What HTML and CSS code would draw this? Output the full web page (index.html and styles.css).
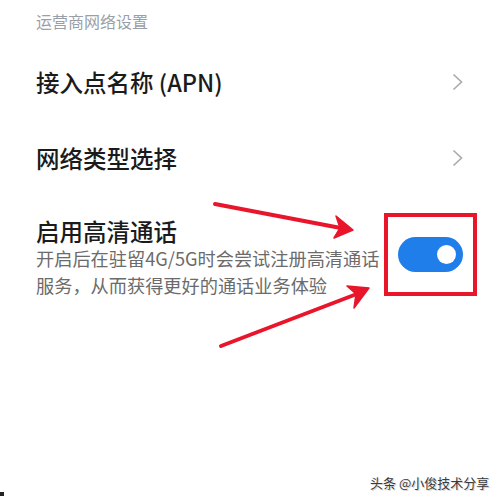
FILE: index.html
```html
<!DOCTYPE html>
<html lang="zh-CN">
<head>
  <meta charset="UTF-8" />
  <meta name="viewport" content="width=device-width, initial-scale=1.0"/>
  <title>运营商网络设置</title>
  <link rel="stylesheet" href="styles.css">
</head>
<body>

  <div class="page">
    <div class="section-title">运营商网络设置</div>

    <div class="row">
      <div class="row-title">接入点名称 (APN)</div>
      <svg class="chevron" width="11" height="18" viewBox="0 0 11 18">
        <polyline points="1.5,1.5 9.5,9 1.5,16.5" />
      </svg>
    </div>

    <div class="row">
      <div class="row-title">网络类型选择</div>
      <svg class="chevron" width="11" height="18" viewBox="0 0 11 18">
        <polyline points="1.5,1.5 9.5,9 1.5,16.5" />
      </svg>
    </div>

    <div class="row row-switch">
      <div class="row-text">
        <div class="row-title">启用高清通话</div>
        <div class="row-desc">开启后在驻留4G/5G时会尝试注册高清通话服务，从而获得更好的通话业务体验</div>
      </div>
      <div class="switch on"><span class="knob"></span></div>
    </div>
  </div>

  <!-- annotations drawn over the screenshot -->
  <svg class="marks" width="500" height="500" viewBox="0 0 500 500">
    <rect x="386" y="215" width="89" height="79" />
    <line x1="215" y1="204" x2="346" y2="229" />
    <polygon points="353,230 336,216 340,228 334,238" />
    <line x1="221" y1="346" x2="362" y2="292" />
    <polygon points="369,288 347,286 356,294 354,308" />
  </svg>

  <div class="watermark">头条 @小俊技术分享</div>
  <div class="dot"></div>

</body>
</html>
```

FILE: styles.css
```css
:root {
  --text: #1b1b1b;
  --sub: #6b6b6b;
  --muted: #9a9fa7;
  --blue: #1f7ee9;
  --red: #e8152b;
}

* {
  box-sizing: border-box;
}

body {
  margin: 0;
  width: 500px;
  height: 500px;
  background: #fff;
  font-family: "Noto Sans CJK SC", "Noto Sans", sans-serif;
  position: relative;
  overflow: hidden;
}

.page {
  padding: 10px 37px 0 36px;
}

.section-title {
  font-size: 16px;
  line-height: 22px;
  color: var(--muted);
  margin-bottom: 12px;
}

.row {
  display: flex;
  align-items: center;
  justify-content: space-between;
  height: 76px;
}

.row-title {
  font-size: 23.5px;
  font-weight: 500;
  color: var(--text);
  line-height: 27px;
}

.chevron polyline {
  fill: none;
  stroke: #a9a9a9;
  stroke-width: 1.6;
}

.row-switch {
  height: auto;
  padding-top: 22px;
}

.row-text {
  width: 346px;
}

.row-desc {
  font-size: 18.2px;
  line-height: 27px;
  color: var(--sub);
}

.switch {
  width: 65px;
  height: 35px;
  border-radius: 18px;
  background: #d6d6d6;
  display: flex;
  align-items: center;
  justify-content: flex-end;
  padding-right: 7px;
  margin-bottom: 8px;
}

.switch.on {
  background: var(--blue);
}

.knob {
  width: 19px;
  height: 19px;
  border-radius: 50%;
  background: #fff;
}

.marks {
  position: absolute;
  left: 0;
  top: 0;
  pointer-events: none;
}

.marks rect {
  fill: none;
  stroke: var(--red);
  stroke-width: 4;
}

.marks line {
  stroke: var(--red);
  stroke-width: 4;
  stroke-linecap: round;
}

.marks polygon {
  fill: var(--red);
  stroke: var(--red);
  stroke-width: 1.5;
  stroke-linejoin: round;
}

.watermark {
  position: absolute;
  left: 370px;
  top: 474px;
  font-size: 13px;
  line-height: 18px;
  color: #3a3a3a;
  text-shadow: 0 0 2px #fff, 1px 1px 0 #ccc;
  white-space: nowrap;
}

.dot {
  position: absolute;
  left: 0;
  top: 492px;
  width: 4px;
  height: 4px;
  background: #222;
}
```
